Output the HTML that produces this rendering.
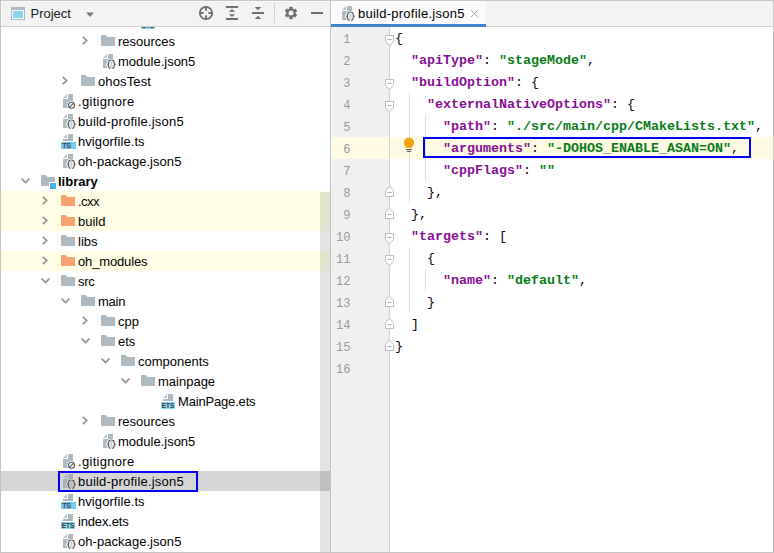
<!DOCTYPE html>
<html><head><meta charset="utf-8"><title>build-profile.json5</title>
<style>
html,body{margin:0;padding:0;background:#fff;}
body{width:774px;height:553px;position:relative;overflow:hidden;font-family:"Liberation Sans",sans-serif;font-size:13px;color:#000;}
#frame{position:absolute;left:0;top:0;width:772px;height:551px;border:1px solid #c4c4c4;z-index:50;pointer-events:none;}
#left{position:absolute;left:1px;top:1px;width:329px;height:551px;background:#fff;overflow:hidden;}
#lhead{position:absolute;left:0;top:0;width:329px;height:25px;background:#f3f3f3;box-shadow:inset 1px 1px 0 #fafafa;border-bottom:1px solid #d1d1d1;z-index:5;}
#tree{position:absolute;left:-1px;top:-1px;width:331px;height:553px;}
.row{position:absolute;left:1px;width:329px;height:20px;line-height:20px;white-space:nowrap;}
.row.yel{background:#fffee4;}
.row.sel{background:#d5d5d5;}
.row.bold .lb{font-weight:bold;}
.row span{position:absolute;top:0;}
.row .lb{margin-left:-1px;top:1px;}
.row .icw{top:2px;height:16px;margin-left:-1px;}
.row .arw{top:4px;height:12px;margin-left:-1px;}
svg{display:block;}
#vsb{position:absolute;left:319px;top:191px;width:10px;height:361px;background:rgba(100,100,100,.18);z-index:4;}
#split{position:absolute;left:330px;top:1px;width:1px;height:551px;background:#c4c4c4;}
#right{position:absolute;left:331px;top:1px;width:442px;height:551px;background:#fff;overflow:hidden;}
#tabs{position:absolute;left:0;top:0;width:442px;height:25px;background:#f3f3f3;border-bottom:1px solid #d1d1d1;}
#tab{position:absolute;left:0;top:0;width:155px;height:23px;background:#fbfbfb;border-bottom:3px solid #4083c9;}
#gutter{position:absolute;left:0;top:26px;width:58px;height:525px;background:#f0f0f0;border-right:1px solid #d4d4d4;}
.ln{position:absolute;left:0;width:19.400px;margin-top:1px;text-align:right;font-family:"Liberation Mono",monospace;font-size:12px;color:#999;height:22px;line-height:23px;}
.cl{position:absolute;left:64px;height:22px;line-height:22px;font-family:"Liberation Mono",monospace;font-size:13.333px;white-space:pre;color:#080808;}
.cl b.k{color:#871094;}
.cl b.s{color:#067d17;}
.fm{position:absolute;left:54px;}
#hl{position:absolute;left:0;top:136px;width:442px;height:22px;background:#fffae3;}
.guide{position:absolute;width:1px;background:#dcdcdc;}
#box1{position:absolute;left:423px;top:137px;width:324px;height:17px;border:2px solid #0000f5;z-index:20;}
#box2{position:absolute;left:58px;top:471px;width:136px;height:17px;border:2px solid #0000f5;z-index:20;}
</style></head><body>
<div id="left">
<div id="tree">
<div class="row " style="top:11px"><span class="icw" style="left:140px"><svg class="ic" width="16" height="16" viewBox="0 0 16 16"><path d="M8 1h5v7H3V6h5z" fill="#9aa7b0" fill-opacity=".8"/><path d="M7 1L3 5h4z" fill="#9aa7b0" fill-opacity=".65"/><rect x="1" y="9" width="14" height="7" fill="#40b6e0" fill-opacity=".6"/><text x="8" y="14.700" text-anchor="middle" font-family="Liberation Sans, sans-serif" font-weight="bold" font-size="6.400" fill="#2f3d45">ETS</text></svg></span><span class="lb" style="left:158px"></span></div>
<div class="row " style="top:31px"><span class="arw" style="left:78px"><svg class="ar" width="14" height="12" viewBox="0 0 14 12"><path d="M4.700 1.800l4 3.700-4 3.700" fill="none" stroke="#939393" stroke-width="1.700"/></svg></span><span class="icw" style="left:100px"><svg class="ic" width="16" height="16" viewBox="0 0 16 16"><path d="M1 2h4.800l1.700 2H15v9H1z" fill="#9aa7b0" fill-opacity=".8"/></svg></span><span class="lb" style="left:118px">resources</span></div>
<div class="row " style="top:51px"><span class="icw" style="left:100px"><svg class="ic" width="16" height="17" viewBox="0 0 16 17"><path d="M8 1h5v14H3V6h5z" fill="#9aa7b0" fill-opacity=".8"/><path d="M7 1L3 5h4z" fill="#9aa7b0" fill-opacity=".65"/><path d="M10.600 7.400c-1.600 0-1.900.7-1.900 1.600v1.100c0 .8-.4 1.200-1.400 1.300 1 .1 1.400.5 1.400 1.300v1.100c0 .9.300 1.600 1.900 1.600M12.200 7.400c1.600 0 1.900.7 1.900 1.600v1.100c0 .8.400 1.200 1.400 1.300-1 .1-1.400.5-1.400 1.300v1.100c0 .9-.3 1.600-1.900 1.600" fill="none" stroke="#fff" stroke-width="3" stroke-linejoin="round"/><rect x="9.500" y="8" width="3.800" height="7" fill="#fff"/><rect x="10.300" y="8.300" width="2.200" height="6.400" fill="#9aa7b0" fill-opacity=".5"/><path d="M10.600 7.400c-1.600 0-1.900.7-1.900 1.600v1.100c0 .8-.4 1.200-1.400 1.300 1 .1 1.400.5 1.400 1.300v1.100c0 .9.300 1.600 1.900 1.600M12.200 7.400c1.600 0 1.900.7 1.900 1.600v1.100c0 .8.400 1.200 1.400 1.300-1 .1-1.400.5-1.400 1.300v1.100c0 .9-.3 1.600-1.900 1.600" fill="none" stroke="#4a4e51" stroke-width="1.100"/></svg></span><span class="lb" style="left:118px">module.json5</span></div>
<div class="row " style="top:71px"><span class="arw" style="left:58px"><svg class="ar" width="14" height="12" viewBox="0 0 14 12"><path d="M4.700 1.800l4 3.700-4 3.700" fill="none" stroke="#939393" stroke-width="1.700"/></svg></span><span class="icw" style="left:80px"><svg class="ic" width="16" height="16" viewBox="0 0 16 16"><path d="M1 2h4.800l1.700 2H15v9H1z" fill="#9aa7b0" fill-opacity=".8"/></svg></span><span class="lb" style="left:98px;letter-spacing:0.12px">ohosTest</span></div>
<div class="row " style="top:91px"><span class="icw" style="left:60px"><svg class="ic" width="16" height="17" viewBox="0 0 16 17"><path d="M8 1h5v14H3V6h5z" fill="#9aa7b0" fill-opacity=".8"/><path d="M7 1L3 5h4z" fill="#9aa7b0" fill-opacity=".65"/><circle cx="11.500" cy="12.200" r="4.300" fill="#fff"/><circle cx="11.500" cy="12.200" r="3" fill="none" stroke="#555a5d" stroke-width="1.100"/><path d="M9.400 14.300l4.200-4.200" stroke="#555a5d" stroke-width="1.100"/></svg></span><span class="lb" style="left:78px;letter-spacing:0.3px">.gitignore</span></div>
<div class="row " style="top:111px"><span class="icw" style="left:60px"><svg class="ic" width="16" height="17" viewBox="0 0 16 17"><path d="M8 1h5v14H3V6h5z" fill="#9aa7b0" fill-opacity=".8"/><path d="M7 1L3 5h4z" fill="#9aa7b0" fill-opacity=".65"/><path d="M10.600 7.400c-1.600 0-1.900.7-1.900 1.600v1.100c0 .8-.4 1.200-1.400 1.300 1 .1 1.400.5 1.400 1.300v1.100c0 .9.300 1.600 1.900 1.600M12.200 7.400c1.600 0 1.900.7 1.900 1.600v1.100c0 .8.400 1.200 1.400 1.300-1 .1-1.400.5-1.400 1.300v1.100c0 .9-.3 1.600-1.900 1.600" fill="none" stroke="#fff" stroke-width="3" stroke-linejoin="round"/><rect x="9.500" y="8" width="3.800" height="7" fill="#fff"/><rect x="10.300" y="8.300" width="2.200" height="6.400" fill="#9aa7b0" fill-opacity=".5"/><path d="M10.600 7.400c-1.600 0-1.900.7-1.900 1.600v1.100c0 .8-.4 1.200-1.400 1.300 1 .1 1.400.5 1.400 1.300v1.100c0 .9.300 1.600 1.900 1.600M12.200 7.400c1.600 0 1.900.7 1.900 1.600v1.100c0 .8.400 1.200 1.400 1.300-1 .1-1.400.5-1.400 1.300v1.100c0 .9-.3 1.600-1.900 1.600" fill="none" stroke="#4a4e51" stroke-width="1.100"/></svg></span><span class="lb" style="left:78px;letter-spacing:0.21px">build-profile.json5</span></div>
<div class="row " style="top:131px"><span class="icw" style="left:60px"><svg class="ic" width="16" height="16" viewBox="0 0 16 16"><path d="M8 1h5v7H3V6h5z" fill="#9aa7b0" fill-opacity=".8"/><path d="M7 1L3 5h4z" fill="#9aa7b0" fill-opacity=".65"/><rect x="1" y="9" width="15" height="7" fill="#40b6e0" fill-opacity=".7"/><text x="2.200" y="14.700" font-family="Liberation Sans, sans-serif" font-size="6.800" fill="#2f3d45" stroke="#2f3d45" stroke-width=".25">TS</text></svg></span><span class="lb" style="left:78px;letter-spacing:0.07px">hvigorfile.ts</span></div>
<div class="row " style="top:151px"><span class="icw" style="left:60px"><svg class="ic" width="16" height="17" viewBox="0 0 16 17"><path d="M8 1h5v14H3V6h5z" fill="#9aa7b0" fill-opacity=".8"/><path d="M7 1L3 5h4z" fill="#9aa7b0" fill-opacity=".65"/><path d="M10.600 7.400c-1.600 0-1.900.7-1.900 1.600v1.100c0 .8-.4 1.200-1.400 1.300 1 .1 1.400.5 1.400 1.300v1.100c0 .9.300 1.600 1.900 1.600M12.200 7.400c1.600 0 1.900.7 1.900 1.600v1.100c0 .8.400 1.200 1.400 1.300-1 .1-1.400.5-1.400 1.300v1.100c0 .9-.3 1.600-1.900 1.600" fill="none" stroke="#fff" stroke-width="3" stroke-linejoin="round"/><rect x="9.500" y="8" width="3.800" height="7" fill="#fff"/><rect x="10.300" y="8.300" width="2.200" height="6.400" fill="#9aa7b0" fill-opacity=".5"/><path d="M10.600 7.400c-1.600 0-1.900.7-1.900 1.600v1.100c0 .8-.4 1.200-1.400 1.300 1 .1 1.400.5 1.400 1.300v1.100c0 .9.300 1.600 1.900 1.600M12.200 7.400c1.600 0 1.900.7 1.900 1.600v1.100c0 .8.400 1.200 1.400 1.300-1 .1-1.400.5-1.400 1.300v1.100c0 .9-.3 1.600-1.900 1.600" fill="none" stroke="#4a4e51" stroke-width="1.100"/></svg></span><span class="lb" style="left:78px;letter-spacing:0.05px">oh-package.json5</span></div>
<div class="row bold" style="top:171px"><span class="arw" style="left:18px"><svg class="ar" width="14" height="12" viewBox="0 0 14 12"><path d="M3.600 3.700l3.900 3.900 3.900-3.900" fill="none" stroke="#939393" stroke-width="1.700"/></svg></span><span class="icw" style="left:40px"><svg class="ic" width="16" height="16" viewBox="0 0 16 16"><path d="M1 2h4.800l1.700 2H15v5H9v4H1z" fill="#9aa7b0" fill-opacity=".8"/><rect x="10" y="10" width="6" height="6" fill="#40b6e0"/></svg></span><span class="lb" style="left:58px">library</span></div>
<div class="row yel" style="top:191px"><span class="arw" style="left:38px"><svg class="ar" width="14" height="12" viewBox="0 0 14 12"><path d="M4.700 1.800l4 3.700-4 3.700" fill="none" stroke="#939393" stroke-width="1.700"/></svg></span><span class="icw" style="left:60px"><svg class="ic" width="16" height="16" viewBox="0 0 16 16"><path d="M1 2h4.800l1.700 2H15v9H1z" fill="#f26522" fill-opacity=".6"/></svg></span><span class="lb" style="left:78px;letter-spacing:-0.5px">.cxx</span></div>
<div class="row yel" style="top:211px"><span class="arw" style="left:38px"><svg class="ar" width="14" height="12" viewBox="0 0 14 12"><path d="M4.700 1.800l4 3.700-4 3.700" fill="none" stroke="#939393" stroke-width="1.700"/></svg></span><span class="icw" style="left:60px"><svg class="ic" width="16" height="16" viewBox="0 0 16 16"><path d="M1 2h4.800l1.700 2H15v9H1z" fill="#f26522" fill-opacity=".6"/></svg></span><span class="lb" style="left:78px">build</span></div>
<div class="row " style="top:231px"><span class="arw" style="left:38px"><svg class="ar" width="14" height="12" viewBox="0 0 14 12"><path d="M4.700 1.800l4 3.700-4 3.700" fill="none" stroke="#939393" stroke-width="1.700"/></svg></span><span class="icw" style="left:60px"><svg class="ic" width="16" height="16" viewBox="0 0 16 16"><path d="M1 2h4.800l1.700 2H15v9H1z" fill="#9aa7b0" fill-opacity=".8"/></svg></span><span class="lb" style="left:78px">libs</span></div>
<div class="row yel" style="top:251px"><span class="arw" style="left:38px"><svg class="ar" width="14" height="12" viewBox="0 0 14 12"><path d="M4.700 1.800l4 3.700-4 3.700" fill="none" stroke="#939393" stroke-width="1.700"/></svg></span><span class="icw" style="left:60px"><svg class="ic" width="16" height="16" viewBox="0 0 16 16"><path d="M1 2h4.800l1.700 2H15v9H1z" fill="#f26522" fill-opacity=".6"/></svg></span><span class="lb" style="left:78px;letter-spacing:-0.15px">oh_modules</span></div>
<div class="row " style="top:271px"><span class="arw" style="left:38px"><svg class="ar" width="14" height="12" viewBox="0 0 14 12"><path d="M3.600 3.700l3.900 3.900 3.900-3.900" fill="none" stroke="#939393" stroke-width="1.700"/></svg></span><span class="icw" style="left:60px"><svg class="ic" width="16" height="16" viewBox="0 0 16 16"><path d="M1 2h4.800l1.700 2H15v9H1z" fill="#9aa7b0" fill-opacity=".8"/></svg></span><span class="lb" style="left:78px;letter-spacing:-0.33px">src</span></div>
<div class="row " style="top:291px"><span class="arw" style="left:58px"><svg class="ar" width="14" height="12" viewBox="0 0 14 12"><path d="M3.600 3.700l3.900 3.900 3.900-3.900" fill="none" stroke="#939393" stroke-width="1.700"/></svg></span><span class="icw" style="left:80px"><svg class="ic" width="16" height="16" viewBox="0 0 16 16"><path d="M1 2h4.800l1.700 2H15v9H1z" fill="#9aa7b0" fill-opacity=".8"/></svg></span><span class="lb" style="left:98px;letter-spacing:-0.27px">main</span></div>
<div class="row " style="top:311px"><span class="arw" style="left:78px"><svg class="ar" width="14" height="12" viewBox="0 0 14 12"><path d="M4.700 1.800l4 3.700-4 3.700" fill="none" stroke="#939393" stroke-width="1.700"/></svg></span><span class="icw" style="left:100px"><svg class="ic" width="16" height="16" viewBox="0 0 16 16"><path d="M1 2h4.800l1.700 2H15v9H1z" fill="#9aa7b0" fill-opacity=".8"/></svg></span><span class="lb" style="left:118px">cpp</span></div>
<div class="row " style="top:331px"><span class="arw" style="left:78px"><svg class="ar" width="14" height="12" viewBox="0 0 14 12"><path d="M3.600 3.700l3.900 3.900 3.900-3.900" fill="none" stroke="#939393" stroke-width="1.700"/></svg></span><span class="icw" style="left:100px"><svg class="ic" width="16" height="16" viewBox="0 0 16 16"><path d="M1 2h4.800l1.700 2H15v9H1z" fill="#9aa7b0" fill-opacity=".8"/></svg></span><span class="lb" style="left:118px">ets</span></div>
<div class="row " style="top:351px"><span class="arw" style="left:98px"><svg class="ar" width="14" height="12" viewBox="0 0 14 12"><path d="M3.600 3.700l3.900 3.900 3.900-3.900" fill="none" stroke="#939393" stroke-width="1.700"/></svg></span><span class="icw" style="left:120px"><svg class="ic" width="16" height="16" viewBox="0 0 16 16"><path d="M1 2h4.800l1.700 2H15v9H1z" fill="#9aa7b0" fill-opacity=".8"/></svg></span><span class="lb" style="left:138px">components</span></div>
<div class="row " style="top:371px"><span class="arw" style="left:118px"><svg class="ar" width="14" height="12" viewBox="0 0 14 12"><path d="M3.600 3.700l3.900 3.900 3.900-3.900" fill="none" stroke="#939393" stroke-width="1.700"/></svg></span><span class="icw" style="left:140px"><svg class="ic" width="16" height="16" viewBox="0 0 16 16"><path d="M1 2h4.800l1.700 2H15v9H1z" fill="#9aa7b0" fill-opacity=".8"/></svg></span><span class="lb" style="left:158px">mainpage</span></div>
<div class="row " style="top:391px"><span class="icw" style="left:160px"><svg class="ic" width="16" height="16" viewBox="0 0 16 16"><path d="M8 1h5v7H3V6h5z" fill="#9aa7b0" fill-opacity=".8"/><path d="M7 1L3 5h4z" fill="#9aa7b0" fill-opacity=".65"/><rect x="1" y="9" width="14" height="7" fill="#40b6e0" fill-opacity=".6"/><text x="8" y="14.700" text-anchor="middle" font-family="Liberation Sans, sans-serif" font-weight="bold" font-size="6.400" fill="#2f3d45">ETS</text></svg></span><span class="lb" style="left:178px;letter-spacing:-0.17px">MainPage.ets</span></div>
<div class="row " style="top:411px"><span class="arw" style="left:78px"><svg class="ar" width="14" height="12" viewBox="0 0 14 12"><path d="M4.700 1.800l4 3.700-4 3.700" fill="none" stroke="#939393" stroke-width="1.700"/></svg></span><span class="icw" style="left:100px"><svg class="ic" width="16" height="16" viewBox="0 0 16 16"><path d="M1 2h4.800l1.700 2H15v9H1z" fill="#9aa7b0" fill-opacity=".8"/></svg></span><span class="lb" style="left:118px">resources</span></div>
<div class="row " style="top:431px"><span class="icw" style="left:100px"><svg class="ic" width="16" height="17" viewBox="0 0 16 17"><path d="M8 1h5v14H3V6h5z" fill="#9aa7b0" fill-opacity=".8"/><path d="M7 1L3 5h4z" fill="#9aa7b0" fill-opacity=".65"/><path d="M10.600 7.400c-1.600 0-1.900.7-1.900 1.600v1.100c0 .8-.4 1.200-1.400 1.300 1 .1 1.400.5 1.400 1.300v1.100c0 .9.300 1.600 1.900 1.600M12.200 7.400c1.600 0 1.900.7 1.900 1.600v1.100c0 .8.400 1.200 1.400 1.300-1 .1-1.400.5-1.400 1.300v1.100c0 .9-.3 1.600-1.900 1.600" fill="none" stroke="#fff" stroke-width="3" stroke-linejoin="round"/><rect x="9.500" y="8" width="3.800" height="7" fill="#fff"/><rect x="10.300" y="8.300" width="2.200" height="6.400" fill="#9aa7b0" fill-opacity=".5"/><path d="M10.600 7.400c-1.600 0-1.900.7-1.900 1.600v1.100c0 .8-.4 1.200-1.400 1.300 1 .1 1.400.5 1.400 1.300v1.100c0 .9.300 1.600 1.900 1.600M12.200 7.400c1.600 0 1.900.7 1.900 1.600v1.100c0 .8.400 1.200 1.400 1.300-1 .1-1.400.5-1.400 1.300v1.100c0 .9-.3 1.600-1.900 1.600" fill="none" stroke="#4a4e51" stroke-width="1.100"/></svg></span><span class="lb" style="left:118px">module.json5</span></div>
<div class="row " style="top:451px"><span class="icw" style="left:60px"><svg class="ic" width="16" height="17" viewBox="0 0 16 17"><path d="M8 1h5v14H3V6h5z" fill="#9aa7b0" fill-opacity=".8"/><path d="M7 1L3 5h4z" fill="#9aa7b0" fill-opacity=".65"/><circle cx="11.500" cy="12.200" r="4.300" fill="#fff"/><circle cx="11.500" cy="12.200" r="3" fill="none" stroke="#555a5d" stroke-width="1.100"/><path d="M9.400 14.300l4.200-4.200" stroke="#555a5d" stroke-width="1.100"/></svg></span><span class="lb" style="left:78px;letter-spacing:0.3px">.gitignore</span></div>
<div class="row sel" style="top:471px"><span class="icw" style="left:60px"><svg class="ic" width="16" height="17" viewBox="0 0 16 17"><path d="M8 1h5v14H3V6h5z" fill="#9aa7b0" fill-opacity=".8"/><path d="M7 1L3 5h4z" fill="#9aa7b0" fill-opacity=".65"/><path d="M10.600 7.400c-1.600 0-1.900.7-1.900 1.600v1.100c0 .8-.4 1.200-1.400 1.300 1 .1 1.400.5 1.400 1.300v1.100c0 .9.300 1.600 1.900 1.600M12.200 7.400c1.600 0 1.900.7 1.900 1.600v1.100c0 .8.400 1.200 1.400 1.300-1 .1-1.400.5-1.400 1.300v1.100c0 .9-.3 1.600-1.900 1.600" fill="none" stroke="#d5d5d5" stroke-width="3" stroke-linejoin="round"/><rect x="9.500" y="8" width="3.800" height="7" fill="#d5d5d5"/><rect x="10.300" y="8.300" width="2.200" height="6.400" fill="#9aa7b0" fill-opacity=".5"/><path d="M10.600 7.400c-1.600 0-1.900.7-1.900 1.600v1.100c0 .8-.4 1.200-1.400 1.300 1 .1 1.400.5 1.400 1.300v1.100c0 .9.300 1.600 1.900 1.600M12.200 7.400c1.600 0 1.900.7 1.900 1.600v1.100c0 .8.400 1.200 1.400 1.300-1 .1-1.400.5-1.400 1.300v1.100c0 .9-.3 1.600-1.900 1.600" fill="none" stroke="#4a4e51" stroke-width="1.100"/></svg></span><span class="lb" style="left:78px;letter-spacing:0.21px">build-profile.json5</span></div>
<div class="row " style="top:491px"><span class="icw" style="left:60px"><svg class="ic" width="16" height="16" viewBox="0 0 16 16"><path d="M8 1h5v7H3V6h5z" fill="#9aa7b0" fill-opacity=".8"/><path d="M7 1L3 5h4z" fill="#9aa7b0" fill-opacity=".65"/><rect x="1" y="9" width="15" height="7" fill="#40b6e0" fill-opacity=".7"/><text x="2.200" y="14.700" font-family="Liberation Sans, sans-serif" font-size="6.800" fill="#2f3d45" stroke="#2f3d45" stroke-width=".25">TS</text></svg></span><span class="lb" style="left:78px;letter-spacing:0.07px">hvigorfile.ts</span></div>
<div class="row " style="top:511px"><span class="icw" style="left:60px"><svg class="ic" width="16" height="16" viewBox="0 0 16 16"><path d="M8 1h5v7H3V6h5z" fill="#9aa7b0" fill-opacity=".8"/><path d="M7 1L3 5h4z" fill="#9aa7b0" fill-opacity=".65"/><rect x="1" y="9" width="14" height="7" fill="#40b6e0" fill-opacity=".6"/><text x="8" y="14.700" text-anchor="middle" font-family="Liberation Sans, sans-serif" font-weight="bold" font-size="6.400" fill="#2f3d45">ETS</text></svg></span><span class="lb" style="left:78px;letter-spacing:-0.16px">index.ets</span></div>
<div class="row " style="top:531px"><span class="icw" style="left:60px"><svg class="ic" width="16" height="17" viewBox="0 0 16 17"><path d="M8 1h5v14H3V6h5z" fill="#9aa7b0" fill-opacity=".8"/><path d="M7 1L3 5h4z" fill="#9aa7b0" fill-opacity=".65"/><path d="M10.600 7.400c-1.600 0-1.900.7-1.900 1.600v1.100c0 .8-.4 1.200-1.400 1.300 1 .1 1.400.5 1.400 1.300v1.100c0 .9.300 1.600 1.900 1.600M12.200 7.400c1.600 0 1.900.7 1.900 1.600v1.100c0 .8.400 1.200 1.400 1.300-1 .1-1.400.5-1.400 1.300v1.100c0 .9-.3 1.600-1.900 1.600" fill="none" stroke="#fff" stroke-width="3" stroke-linejoin="round"/><rect x="9.500" y="8" width="3.800" height="7" fill="#fff"/><rect x="10.300" y="8.300" width="2.200" height="6.400" fill="#9aa7b0" fill-opacity=".5"/><path d="M10.600 7.400c-1.600 0-1.900.7-1.900 1.600v1.100c0 .8-.4 1.200-1.400 1.300 1 .1 1.400.5 1.400 1.300v1.100c0 .9.300 1.600 1.900 1.600M12.200 7.400c1.600 0 1.900.7 1.900 1.600v1.100c0 .8.400 1.200 1.400 1.300-1 .1-1.400.5-1.400 1.300v1.100c0 .9-.3 1.600-1.900 1.600" fill="none" stroke="#4a4e51" stroke-width="1.100"/></svg></span><span class="lb" style="left:78px;letter-spacing:0.05px">oh-package.json5</span></div>
</div>
<div id="vsb"></div>
<div id="lhead">
<svg style="position:absolute;left:9px;top:5px" width="16" height="16" viewBox="0 0 16 16"><rect x="1" y="1" width="14" height="13" fill="#aeb9c0"/><rect x="2" y="4" width="12" height="9" fill="#f8f8f8"/><rect x="3" y="5" width="10" height="7" fill="#8ed3ec"/></svg>
<span style="position:absolute;left:29.500px;top:0;line-height:26px;font-size:13px;color:#1a1a1a">Project</span>
<svg style="position:absolute;left:84.300px;top:10.700px" width="10" height="6" viewBox="0 0 10 6"><path d="M1 .5h8L5 5z" fill="#7a7a7a"/></svg>
<svg style="position:absolute;left:-1px;top:-1px" width="330" height="26" viewBox="0 0 330 26">
<g fill="none" stroke="#6e6e6e"><circle cx="206" cy="13" r="6.200" stroke-width="1.700"/><path d="M206 6v4.700M206 15.300V20M199 13h4.700M208.300 13H213" stroke-width="1.900"/></g>
<g fill="#6e6e6e"><rect x="226" y="6" width="12" height="2"/><rect x="226" y="18" width="12" height="2"/><path d="M232 9l3.100 2.800h-6.200zM232 17l3.100-2.800h-6.200z"/>
<rect x="252" y="12" width="12" height="2"/><path d="M258 10.200l3.300-3.200h-6.600zM258 15.700l3.300 3.200h-6.600z"/>
<path d="M289.53 8.85L289.67 7.05L292.33 7.05L292.47 8.85L293.86 9.66L295.49 8.87L296.82 11.18L295.33 12.20L295.33 13.80L296.82 14.82L295.49 17.13L293.86 16.34L292.47 17.15L292.33 18.95L289.67 18.95L289.53 17.15L288.14 16.34L286.51 17.13L285.18 14.82L286.67 13.80L286.67 12.20L285.18 11.18L286.51 8.87L288.14 9.66z" stroke="#6e6e6e" stroke-width=".6" stroke-linejoin="round"/><rect x="311" y="12" width="12" height="2"/></g>
<circle cx="291" cy="13" r="2.500" fill="#f3f3f3"/>
<rect x="274" y="3" width="1" height="20" fill="#d1d1d1"/>
</svg>
</div>
</div>
<div id="split"></div>
<div id="right">
<div id="hl"></div>
<div id="gutter"></div>
<div id="ghl" style="position:absolute;left:0;top:136px;width:58px;height:22px;background:#fffae3"></div>
<div class="guide" style="left:78px;top:92px;height:110px"></div>
<div class="guide" style="left:94px;top:114px;height:66px"></div>
<div class="guide" style="left:78px;top:246px;height:66px"></div>
<div class="guide" style="left:94px;top:268px;height:22px"></div>
<div id="nums" style="position:absolute;left:0;top:0"><div class="ln" style="top:27px">1</div><div class="ln" style="top:49px">2</div><div class="ln" style="top:71px">3</div><div class="ln" style="top:93px">4</div><div class="ln" style="top:115px">5</div><div class="ln" style="top:137px">6</div><div class="ln" style="top:159px">7</div><div class="ln" style="top:181px">8</div><div class="ln" style="top:203px">9</div><div class="ln" style="top:225px">10</div><div class="ln" style="top:247px">11</div><div class="ln" style="top:269px">12</div><div class="ln" style="top:291px">13</div><div class="ln" style="top:313px">14</div><div class="ln" style="top:335px">15</div><div class="ln" style="top:357px">16</div></div>
<svg class="fm" style="top:34px" width="10" height="12" viewBox="0 0 10 12"><path d="M.5.5h8v6l-4 4.500-4-4.500z" fill="#fff" stroke="#bcbcbc"/><path d="M2.500 4.500h4" stroke="#adadad"/></svg><svg class="fm" style="top:78px" width="10" height="12" viewBox="0 0 10 12"><path d="M.5.5h8v6l-4 4.500-4-4.500z" fill="#fff" stroke="#bcbcbc"/><path d="M2.500 4.500h4" stroke="#adadad"/></svg><svg class="fm" style="top:100px" width="10" height="12" viewBox="0 0 10 12"><path d="M.5.5h8v6l-4 4.500-4-4.500z" fill="#fff" stroke="#bcbcbc"/><path d="M2.500 4.500h4" stroke="#adadad"/></svg><svg class="fm" style="top:184px" width="10" height="12" viewBox="0 0 10 12"><path d="M.5 11.500h8v-6l-4-4.500-4 4.500z" fill="#fff" stroke="#bcbcbc"/><path d="M2.500 7.500h4" stroke="#adadad"/></svg><svg class="fm" style="top:206px" width="10" height="12" viewBox="0 0 10 12"><path d="M.5 11.500h8v-6l-4-4.500-4 4.500z" fill="#fff" stroke="#bcbcbc"/><path d="M2.500 7.500h4" stroke="#adadad"/></svg><svg class="fm" style="top:232px" width="10" height="12" viewBox="0 0 10 12"><path d="M.5.5h8v6l-4 4.500-4-4.500z" fill="#fff" stroke="#bcbcbc"/><path d="M2.500 4.500h4" stroke="#adadad"/></svg><svg class="fm" style="top:254px" width="10" height="12" viewBox="0 0 10 12"><path d="M.5.5h8v6l-4 4.500-4-4.500z" fill="#fff" stroke="#bcbcbc"/><path d="M2.500 4.500h4" stroke="#adadad"/></svg><svg class="fm" style="top:294px" width="10" height="12" viewBox="0 0 10 12"><path d="M.5 11.500h8v-6l-4-4.500-4 4.500z" fill="#fff" stroke="#bcbcbc"/><path d="M2.500 7.500h4" stroke="#adadad"/></svg><svg class="fm" style="top:316px" width="10" height="12" viewBox="0 0 10 12"><path d="M.5 11.500h8v-6l-4-4.500-4 4.500z" fill="#fff" stroke="#bcbcbc"/><path d="M2.500 7.500h4" stroke="#adadad"/></svg><svg class="fm" style="top:338px" width="10" height="12" viewBox="0 0 10 12"><path d="M.5 11.500h8v-6l-4-4.500-4 4.500z" fill="#fff" stroke="#bcbcbc"/><path d="M2.500 7.500h4" stroke="#adadad"/></svg>
<svg style="position:absolute;left:71px;top:135px" width="14" height="18" viewBox="0 0 14 18"><path d="M7 1.800a5 5 0 0 0-3.300 8.800v1.200h6.600v-1.200A5 5 0 0 0 7 1.800z" fill="#f0a30a"/><path d="M3.900 13.500h6.200M4.800 15.400h4.400" stroke="#555" stroke-width="1"/></svg>
<div class="cl" style="top:27px">{</div><div class="cl" style="top:49px">  <b class="k">"apiType"</b>: <b class="s">"stageMode"</b>,</div><div class="cl" style="top:71px">  <b class="k">"buildOption"</b>: {</div><div class="cl" style="top:93px">    <b class="k">"externalNativeOptions"</b>: {</div><div class="cl" style="top:115px">      <b class="k">"path"</b>: <b class="s">"./src/main/cpp/CMakeLists.txt"</b>,</div><div class="cl" style="top:137px">      <b class="k">"arguments"</b>: <b class="s">"-DOHOS_ENABLE_ASAN=ON"</b>,</div><div class="cl" style="top:159px">      <b class="k">"cppFlags"</b>: <b class="s">""</b></div><div class="cl" style="top:181px">    },</div><div class="cl" style="top:203px">  },</div><div class="cl" style="top:225px">  <b class="k">"targets"</b>: [</div><div class="cl" style="top:247px">    {</div><div class="cl" style="top:269px">      <b class="k">"name"</b>: <b class="s">"default"</b>,</div><div class="cl" style="top:291px">    }</div><div class="cl" style="top:313px">  ]</div><div class="cl" style="top:335px">}</div><div class="cl" style="top:357px"></div>
<div id="tabs"><div id="tab">
<span style="position:absolute;left:8px;top:4px"><svg class="ic" width="16" height="17" viewBox="0 0 16 17"><path d="M8 1h5v14H3V6h5z" fill="#9aa7b0" fill-opacity=".8"/><path d="M7 1L3 5h4z" fill="#9aa7b0" fill-opacity=".65"/><path d="M10.600 7.400c-1.600 0-1.900.7-1.900 1.600v1.100c0 .8-.4 1.200-1.400 1.300 1 .1 1.400.5 1.400 1.300v1.100c0 .9.300 1.600 1.900 1.600M12.200 7.400c1.600 0 1.900.7 1.900 1.600v1.100c0 .8.400 1.200 1.400 1.300-1 .1-1.400.5-1.400 1.300v1.100c0 .9-.3 1.600-1.900 1.600" fill="none" stroke="#fff" stroke-width="3" stroke-linejoin="round"/><rect x="9.500" y="8" width="3.800" height="7" fill="#fff"/><rect x="10.300" y="8.300" width="2.200" height="6.400" fill="#9aa7b0" fill-opacity=".5"/><path d="M10.600 7.400c-1.600 0-1.900.7-1.900 1.600v1.100c0 .8-.4 1.200-1.400 1.300 1 .1 1.400.5 1.400 1.300v1.100c0 .9.300 1.600 1.900 1.600M12.200 7.400c1.600 0 1.900.7 1.900 1.600v1.100c0 .8.400 1.200 1.400 1.300-1 .1-1.400.5-1.400 1.300v1.100c0 .9-.3 1.600-1.900 1.600" fill="none" stroke="#4a4e51" stroke-width="1.100"/></svg></span>
<span style="position:absolute;left:27px;top:0;line-height:25px;font-size:13px;color:#000;letter-spacing:.25px">build-profile.json5</span>
<svg style="position:absolute;left:138.500px;top:8px" width="9" height="9" viewBox="0 0 9 9"><path d="M1 1l7 7M8 1l-7 7" stroke="#a8a8a8" stroke-width="1"/></svg>
</div></div>
</div>
<div id="box1"></div>
<div id="box2"></div>
<div id="frame"></div>
</body></html>
